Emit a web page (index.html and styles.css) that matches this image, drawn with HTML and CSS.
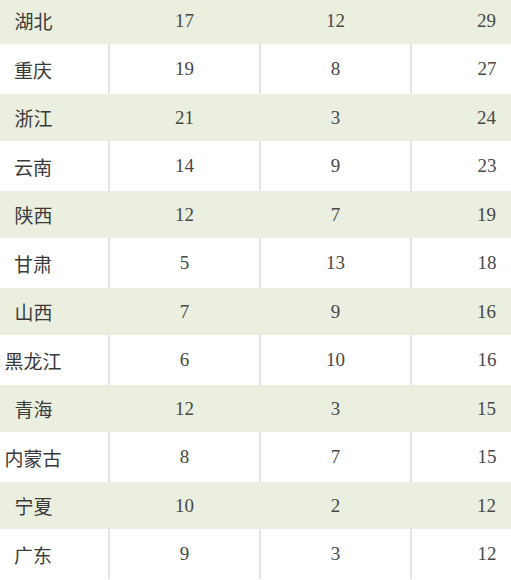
FILE: index.html
```html
<!DOCTYPE html>
<html lang="zh">
<head>
<meta charset="utf-8">
<link rel="stylesheet" href="styles.css">
</head>
<body>
<div class="frame">
<table class="stats">
<tbody>
<tr><td class="name">湖北</td><td>17</td><td>12</td><td>29</td></tr>
<tr><td class="name">重庆</td><td>19</td><td>8</td><td>27</td></tr>
<tr><td class="name">浙江</td><td>21</td><td>3</td><td>24</td></tr>
<tr><td class="name">云南</td><td>14</td><td>9</td><td>23</td></tr>
<tr><td class="name">陕西</td><td>12</td><td>7</td><td>19</td></tr>
<tr><td class="name">甘肃</td><td>5</td><td>13</td><td>18</td></tr>
<tr><td class="name">山西</td><td>7</td><td>9</td><td>16</td></tr>
<tr><td class="name">黑龙江</td><td>6</td><td>10</td><td>16</td></tr>
<tr><td class="name">青海</td><td>12</td><td>3</td><td>15</td></tr>
<tr><td class="name">内蒙古</td><td>8</td><td>7</td><td>15</td></tr>
<tr><td class="name">宁夏</td><td>10</td><td>2</td><td>12</td></tr>
<tr><td class="name">广东</td><td>9</td><td>3</td><td>12</td></tr>
</tbody>
</table>
</div>
</body>
</html>
```
FILE: styles.css
```css
html, body {
  margin: 0;
  padding: 0;
  background: #ffffff;
}
.frame {
  width: 511px;
  height: 580px;
  overflow: hidden;
}
.stats {
  border-collapse: collapse;
  table-layout: fixed;
  width: 604px;
  margin-left: -42px;
  margin-top: -3px;
  font-family: "Liberation Serif", "Noto Sans CJK SC", serif;
  font-size: 19px;
  color: #484848;
}
.stats td {
  width: 151px;
  padding: 0;
  text-align: center;
  vertical-align: middle;
}
.stats td.name {
  font-family: "Noto Sans CJK SC", sans-serif;
  font-size: 19px;
  color: #3a3a3a;
}
.stats tr:nth-child(odd) {
  height: 47px;
  background: #eaefdf;
}
.stats tr:nth-child(even) {
  height: 50px;
  background: #ffffff;
}
.stats tr:nth-child(even) td + td {
  border-left: 2px solid #e4e4e4;
}
```
